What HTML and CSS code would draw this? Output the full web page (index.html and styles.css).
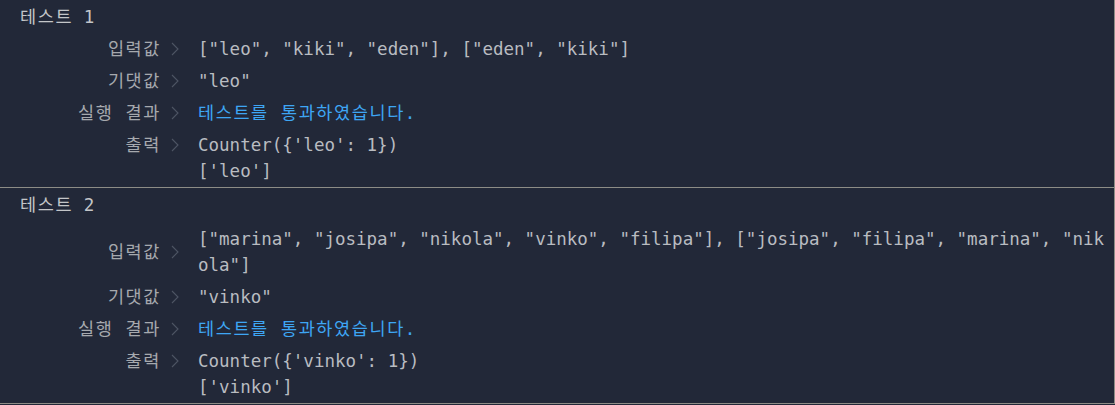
FILE: index.html
```html
<!DOCTYPE html>
<html lang="ko">
<head>
<meta charset="utf-8">
<title>테스트 결과</title>
<link rel="stylesheet" href="styles.css">
</head>
<body>
<div class="console">
  <section class="test">
    <div class="test-title"><span class="ko">테스트</span> 1</div>
    <div class="rows">
      <div class="row">
        <div class="label">입력값</div>
        <div class="chev"><svg width="8" height="14" viewBox="0 0 8 14"><polyline points="1,1 7,7 1,13" /></svg></div>
        <div class="value">["leo", "kiki", "eden"], ["eden", "kiki"]</div>
      </div>
      <div class="row">
        <div class="label">기댓값</div>
        <div class="chev"><svg width="8" height="14" viewBox="0 0 8 14"><polyline points="1,1 7,7 1,13" /></svg></div>
        <div class="value">"leo"</div>
      </div>
      <div class="row">
        <div class="label">실행 결과</div>
        <div class="chev"><svg width="8" height="14" viewBox="0 0 8 14"><polyline points="1,1 7,7 1,13" /></svg></div>
        <div class="value pass"><span class="ko">테스트를 통과하였습니다</span>.</div>
      </div>
      <div class="row">
        <div class="label">출력</div>
        <div class="chev"><svg width="8" height="14" viewBox="0 0 8 14"><polyline points="1,1 7,7 1,13" /></svg></div>
        <div class="value"><div>Counter({'leo': 1})</div><div>['leo']</div></div>
      </div>
    </div>
  </section>
  <section class="test">
    <div class="test-title"><span class="ko">테스트</span> 2</div>
    <div class="rows">
      <div class="row row-wrap">
        <div class="label">입력값</div>
        <div class="chev"><svg width="8" height="14" viewBox="0 0 8 14"><polyline points="1,1 7,7 1,13" /></svg></div>
        <div class="value">["marina", "josipa", "nikola", "vinko", "filipa"], ["josipa", "filipa", "marina", "nikola"]</div>
      </div>
      <div class="row">
        <div class="label">기댓값</div>
        <div class="chev"><svg width="8" height="14" viewBox="0 0 8 14"><polyline points="1,1 7,7 1,13" /></svg></div>
        <div class="value">"vinko"</div>
      </div>
      <div class="row">
        <div class="label">실행 결과</div>
        <div class="chev"><svg width="8" height="14" viewBox="0 0 8 14"><polyline points="1,1 7,7 1,13" /></svg></div>
        <div class="value pass"><span class="ko">테스트를 통과하였습니다</span>.</div>
      </div>
      <div class="row">
        <div class="label">출력</div>
        <div class="chev"><svg width="8" height="14" viewBox="0 0 8 14"><polyline points="1,1 7,7 1,13" /></svg></div>
        <div class="value"><div>Counter({'vinko': 1})</div><div>['vinko']</div></div>
      </div>
    </div>
  </section>
</div>
</body>
</html>
```

FILE: styles.css
```css
html, body {
  margin: 0;
  padding: 0;
  background: #222838;
}

body {
  font-family: "DejaVu Sans Mono", "Noto Sans CJK KR", monospace;
  font-size: 17.5px;
  line-height: 26px;
  color: #b9bcc1;
  width: 1115px;
  height: 405px;
  overflow: hidden;
}

.console {
  width: 1114px;
  border-right: 1px solid #8d8c86;
}

.test {
  padding: 4px 6px 3px 20px;
  border-bottom: 1px solid #8d8c86;
}

.test-title {
  color: #c3c5c8;
  height: 26px;
}

.ko {
  letter-spacing: 1.6px;
}

.rows {
  margin-top: 6px;
  display: flex;
  flex-direction: column;
  gap: 6px;
}

.row {
  display: flex;
  align-items: flex-start;
}

.row-wrap {
  align-items: center;
  padding-top: 2px;
}

.label {
  width: 141px;
  flex: none;
  text-align: right;
  color: #a6a9ae;
  white-space: nowrap;
  letter-spacing: 1.6px;
}

.chev {
  flex: none;
  width: 8px;
  height: 26px;
  margin-left: 10px;
  margin-right: 19px;
  display: flex;
  align-items: center;
}

.chev svg polyline {
  fill: none;
  stroke: #4e5564;
  stroke-width: 1.1;
}

.value {
  flex: 1;
  min-width: 0;
  word-break: break-all;
  color: #b9bcc1;
}

.pass {
  color: #3ea6f4;
}
```
